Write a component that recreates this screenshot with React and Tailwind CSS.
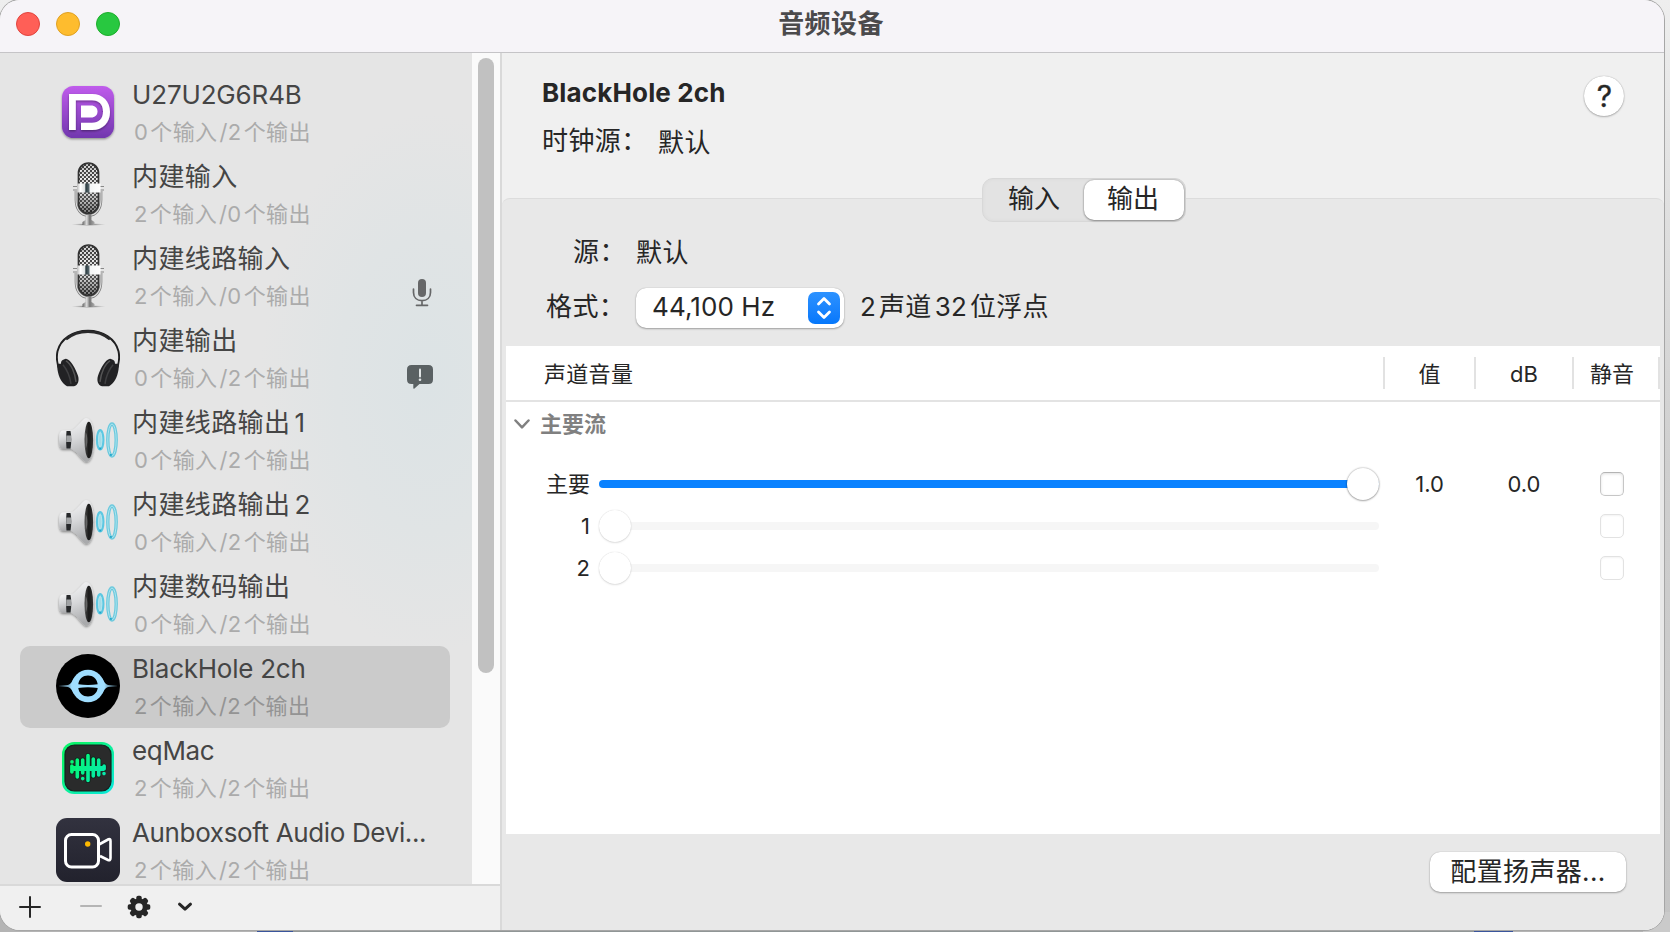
import React from "react";

const Monitor = () => (
  <svg viewBox="0 0 64 64" className="size-16">
    <defs>
      <linearGradient id="pur" x1="0" y1="0" x2="0" y2="1">
        <stop offset="0" stopColor="#c05cec" />
        <stop offset="1" stopColor="#7137ae" />
      </linearGradient>
      <filter id="soft" x="-20%" y="-20%" width="140%" height="150%">
        <feDropShadow dx="0" dy="1.2" stdDeviation="1" floodOpacity=".4" />
      </filter>
    </defs>
    <rect x="6" y="6" width="52" height="52" rx="11.5" fill="url(#pur)" filter="url(#soft)" />
    <path
      d="M13 14H36C47 14 54 21.500 54 32S47 50 36 50H25V42.800H36C43 42.800 47 38.500 47 31.500S43 20.300 36 20.300H19.800V50H13Z"
      fill="#fff"
      filter="url(#soft)"
    />
    <path d="M25 25.500H35C39 25.500 41.500 28 41.500 31.500S39 37.500 35 37.500H25Z" fill="#fff" />
  </svg>
);

const Mic = () => (
  <svg viewBox="0 0 64 64" className="size-16">
    <defs>
      <pattern id="mesh" width="4" height="4" patternUnits="userSpaceOnUse">
        <rect width="4" height="4" fill="#333" />
        <circle cx="1" cy="1" r="1.1" fill="#fff" />
        <circle cx="3" cy="3" r="1.1" fill="#eee" />
      </pattern>
      <linearGradient id="meshShade" x1="0" y1="0" x2="0" y2="1">
        <stop offset="0" stopColor="#444" stopOpacity=".2" />
        <stop offset=".35" stopColor="#fff" stopOpacity=".1" />
        <stop offset="1" stopColor="#111" stopOpacity=".55" />
      </linearGradient>
      <linearGradient id="band" x1="0" y1="0" x2="1" y2="0">
        <stop offset="0" stopColor="#bbb" />
        <stop offset=".15" stopColor="#fff" />
        <stop offset=".32" stopColor="#dfe3e4" />
        <stop offset=".38" stopColor="#2b3b40" />
        <stop offset=".5" stopColor="#56666c" />
        <stop offset=".56" stopColor="#f4f6f6" />
        <stop offset="1" stopColor="#fff" />
      </linearGradient>
      <linearGradient id="stem" x1="0" y1="0" x2="1" y2="0">
        <stop offset="0" stopColor="#666" />
        <stop offset=".35" stopColor="#ddd" />
        <stop offset=".6" stopColor="#777" />
        <stop offset="1" stopColor="#aaa" />
      </linearGradient>
      <radialGradient id="foot">
        <stop offset="0" stopColor="#555" />
        <stop offset="1" stopColor="#999" stopOpacity="0" />
      </radialGradient>
    </defs>
    <ellipse cx="32.500" cy="62.500" rx="17" ry="1.500" fill="url(#foot)" />
    <path d="M20 29V38C20 47 25 53.500 32.500 53.500S45 47 45 38V29" fill="none" stroke="#777" strokeWidth="2.600" />
    <path d="M20 29V38C20 47 25 53.500 32.500 53.500S45 47 45 38V29" fill="none" stroke="#ddd" strokeWidth="1.200" />
    <path d="M29.500 53H35.500V58L38.500 60V63H26.500V60L29.500 58Z" fill="url(#stem)" />
    <rect x="22.500" y="1" width="20" height="50.500" rx="10" fill="url(#mesh)" />
    <rect x="22.500" y="1" width="20" height="50.500" rx="10" fill="url(#meshShade)" stroke="#333" strokeWidth="1.700" />
    <path d="M17 24.500H21M17 28H21M44 24.500H48M44 28H48" stroke="#888" strokeWidth="1.200" />
    <rect x="21" y="21.500" width="23.500" height="9" fill="url(#band)" />
  </svg>
);

const Headphones = () => (
  <svg viewBox="0 -.8 64 64" className="size-16">
    <path d="M4.500 46C1 38 .3 30 1.500 24.500C4.500 12 17 4 32 4S59.500 12 62.500 24.500C63.700 30 63 38 59.500 46" fill="none" stroke="#1f1f20" strokeWidth="1.900" />
    <path d="M10 12.500C17 6.500 25 4.800 32 4.800S47 6.500 54 12.500" fill="none" stroke="#29292a" strokeWidth="2.800" />
    <g id="cup">
      <path d="M5 37C5 33.500 7 32.800 10 32C15 33 19.500 42 22 49C23.500 54 22 58.500 18 59.500H11C6 57 2.500 50 1.500 43L1 37Z" fill="#222224" />
      <path d="M10 34C15 37 19 46 20 55" fill="none" stroke="#555" strokeWidth="1.500" />
      <path d="M7 38C11 43 14 50 15 57" fill="none" stroke="#3f3f41" strokeWidth="1.500" />
    </g>
    <use href="#cup" transform="translate(64 0) scale(-1 1)" />
  </svg>
);

const Speaker = () => (
  <svg viewBox="0 0 64 64" className="size-16">
    <defs>
      <linearGradient id="cone" x1="0" y1="0" x2=".2" y2="1">
        <stop offset="0" stopColor="#f6f6f7" />
        <stop offset=".5" stopColor="#d6d7d9" />
        <stop offset="1" stopColor="#a9aaac" />
      </linearGradient>
      <linearGradient id="dark" x1="0" y1="0" x2="1" y2="0">
        <stop offset="0" stopColor="#4a4a4a" />
        <stop offset=".5" stopColor="#1a1a1a" />
        <stop offset="1" stopColor="#333" />
      </linearGradient>
    </defs>
    <g filter="url(#soft)">
      <path d="M7 22.500H17V41H7C4 41 3 38 3 32S4 22.500 7 22.500Z" fill="url(#cone)" />
      <path d="M30 10C35.500 10 38 20 38 32S35.500 54 30 54C25.500 52.500 21.500 43 14.500 40.500C15.500 35 15.500 28 14.500 23C21.500 20 25.500 11.500 30 10Z" fill="url(#cone)" />
    </g>
    <path d="M10.500 23H14.500C15.500 28 15.500 35 14.500 40.500H10.500C10 35 10 28 10.500 23Z" fill="#26282a" />
    <path d="M10.300 27.500H15V34H10.200Z" fill="#a0a2a4" />
    <ellipse cx="32.800" cy="32" rx="4.300" ry="18.300" fill="url(#dark)" />
    <path d="M29.500 24C32 27 32 37 29.500 41Z" fill="#666" />
    <ellipse cx="44.200" cy="31.800" rx="3.200" ry="9.600" fill="#a5dbe6" stroke="#5cc8e2" strokeWidth="2.200" />
    <ellipse cx="56" cy="32" rx="4.200" ry="16" fill="none" stroke="#6cc9dd" strokeWidth="3.400" />
    <g fill="none" stroke="#b4e6f0" strokeWidth=".9">
      <ellipse cx="44.200" cy="31.800" rx="1.600" ry="7.400" />
      <ellipse cx="56" cy="32" rx="4.200" ry="16" />
    </g>
    <path d="M43.300 40.500H45.200M54 46.500L55.800 47.500" stroke="#1fa5c9" strokeWidth="1.800" />
  </svg>
);

const BlackHole = () => (
  <svg viewBox="0 0 64 64" className="size-16">
    <defs>
      <linearGradient id="ray" x1="0" y1="0" x2="1" y2="0">
        <stop offset="0" stopColor="#a0deff" stopOpacity=".15" />
        <stop offset=".22" stopColor="#a0deff" />
        <stop offset=".78" stopColor="#a0deff" />
        <stop offset="1" stopColor="#a0deff" stopOpacity=".15" />
      </linearGradient>
    </defs>
    <circle cx="32" cy="32" r="32" fill="#000" />
    <path d="M3 31.500L12 31C15 30 16.500 27 17.500 24L20 32L17.500 40C16.500 37 15 34 12 33L3 32.500ZM61 31.500L52 31C49 30 47.500 27 46.500 24L44 32L46.500 40C47.500 37 49 34 52 33L61 32.500Z" fill="url(#ray)" />
    <circle cx="32" cy="32" r="16.200" fill="#a0deff" />
    <path d="M22.300 30.200C23 24.500 27 21.500 32 21.500S41 24.500 41.700 30.200Q32 31.600 22.300 30.200ZM22.300 34C23 39.500 27 42.500 32 42.500S41 39.500 41.700 34Q32 32.600 22.300 34Z" fill="#000" />
    <path d="M16 32H48" stroke="#a0deff" strokeWidth="1.600" />
  </svg>
);

const EqMac = () => (
  <svg viewBox="0 0 64 64" className="size-16">
    <defs>
      <linearGradient id="eq" x1="0" y1="0" x2="1" y2="1">
        <stop offset=".2" stopColor="#0bf56e" />
        <stop offset="1" stopColor="#0ae8e0" />
      </linearGradient>
      <linearGradient id="eqw" gradientUnits="userSpaceOnUse" x1="14" y1="20" x2="50" y2="44">
        <stop offset="0" stopColor="#05fa6c" />
        <stop offset="1" stopColor="#08e8b4" />
      </linearGradient>
    </defs>
    <rect x="6" y="6" width="52" height="52" rx="12" fill="url(#eq)" />
    <rect x="9" y="9" width="46" height="46" rx="9.500" fill="#2a2b2b" stroke="#16211d" strokeWidth="1.200" />
    <g stroke="#0c2419" strokeWidth="5" strokeLinecap="round">
      <path d="M16 30V36M21.300 24V41M26.700 24V37M32 19.500V44.500M37.300 23V40M42.700 24V39M48 30V33" />
    </g>
    <g stroke="url(#eqw)" strokeWidth="3.600" strokeLinecap="round">
      <path d="M15.900 30V36M21.300 24V41M26.700 24V37M32 19.500V44.500M37.300 23V40M42.700 24V39M48.100 30V33" />
      <path d="M16 25.800V25.900M26.700 42.500V42.600M48 37.500V37.600" />
    </g>
    <path d="M16 30H48V35H16Z" fill="url(#eqw)" />
  </svg>
);

const Camera = () => (
  <svg viewBox="0 0 64 64" className="size-16">
    <defs>
      <linearGradient id="cam" x1="0" y1="0" x2="0" y2="1">
        <stop offset="0" stopColor="#32323f" />
        <stop offset="1" stopColor="#22222d" />
      </linearGradient>
    </defs>
    <rect width="64" height="64" rx="11" fill="url(#cam)" />
    <rect x="9.500" y="16.500" width="33" height="32.500" rx="6" fill="none" stroke="#fff" strokeWidth="3" />
    <path d="M43 26.500L52.500 21.300Q54.500 20.500 54.500 23V40Q54.500 43 52 42L44 38" fill="none" stroke="#fff" strokeWidth="2.600" />
    <circle cx="31.700" cy="26" r="2.700" fill="#fdb900" />
  </svg>
);

const MicGlyph = () => (
  <svg viewBox="0 0 20 28" className="ml-[2px] h-7 w-5">
    <rect x="6" y="0" width="8" height="18" rx="4" fill="#666768" />
    <path d="M1.500 10V13.500C1.500 18.500 5 21.700 10 21.700S18.500 18.500 18.500 13.500V10M10 22V26M4.500 26.300H15.500" fill="none" stroke="#666768" strokeWidth="1.700" strokeLinecap="round" />
  </svg>
);

const AlertGlyph = () => (
  <svg viewBox="0 0 26 24" className="mr-[2px] h-6 w-[26px]">
    <path d="M4.500 0H21.500Q26 0 26 4.500V14.500Q26 19 21.500 19H12.500L7.200 23.700Q6.300 24 6.300 23V19H4.500Q0 19 0 14.500V4.500Q0 0 4.500 0Z" fill="#5a6163" />
    <path d="M13 4.500V11.500" stroke="#e1e5e6" strokeWidth="2" strokeLinecap="round" />
    <circle cx="13" cy="14.800" r="1.300" fill="#e1e5e6" />
  </svg>
);

const DEVICES = [
  { icon: Monitor, name: "U27U2G6R4B", ins: 0, outs: 2, latin: "tracking-[-0.15px]" },
  { icon: Mic, name: "内建输入", ins: 2, outs: 0 },
  { icon: Mic, name: "内建线路输入", ins: 2, outs: 0, badge: MicGlyph },
  { icon: Headphones, name: "内建输出", ins: 0, outs: 2, badge: AlertGlyph },
  { icon: Speaker, name: "内建线路输出", num: "1", ins: 0, outs: 2 },
  { icon: Speaker, name: "内建线路输出", num: "2", ins: 0, outs: 2 },
  { icon: Speaker, name: "内建数码输出", ins: 0, outs: 2 },
  { icon: BlackHole, name: "BlackHole 2ch", ins: 2, outs: 2, selected: true, latin: "tracking-[-0.25px]" },
  { icon: EqMac, name: "eqMac", ins: 2, outs: 2, latin: "tracking-[-0.35px]" },
  { icon: Camera, name: "Aunboxsoft Audio Devi...", ins: 2, outs: 2, latin: "tracking-[-0.36px]" },
];

function Device({ d }) {
  const Icon = d.icon;
  const Badge = d.badge;
  return (
    <li className={`flex h-[82px] shrink-0 rounded-[10px] pl-9 pt-2 ${d.selected ? "bg-[#cbcbcb]" : ""}`}>
      <Icon />
      <div className="-mt-px ml-3 w-[236px] whitespace-nowrap">
        <div className={`h-8 text-[26px] leading-[31px] text-[#454545] ${d.latin || "tracking-[0.4px]"}`}>
          {d.name}
          {d.num && <span className="ml-1">{d.num}</span>}
        </div>
        <div className={`mt-[5px] pl-[2px] text-[22px] leading-8 tracking-[0.4px] ${d.selected ? "text-[#949494]" : "text-[#ababab]"}`}>
          <span className="mr-[2px]">{d.ins}</span>个输入<span className="ml-[2px]">/</span>
          <span className="mr-[2px]">{d.outs}</span>个输出
        </div>
      </div>
      {Badge && (
        <div className="ml-[38px] flex h-[74px] w-[30px] items-end justify-center pb-[11px]">
          <Badge />
        </div>
      )}
    </li>
  );
}

function Sidebar() {
  return (
    <aside className="flex w-[502px] shrink-0 flex-col border-r-2 border-[#d9d9d9]">
      <div className="flex h-[831px] overflow-hidden">
        <ul className="flex w-[472px] flex-col bg-[#e5e5e5] bg-[radial-gradient(ellipse_170px_270px_at_430px_330px,#dce3e5_0%,#e0e4e5_55%,#e5e5e500_100%)] pl-5 pr-[22px] pt-[19px]">
          {DEVICES.map((d, i) => (
            <Device key={i} d={d} />
          ))}
        </ul>
        <div className="w-7 bg-[#fafafa] pl-[6px] pt-[5px]">
          <div className="h-[615px] w-4 rounded-full bg-[#c1c1c1]" />
        </div>
      </div>
      <div className="flex flex-1 items-center border-t-2 border-[#d9d9d9] bg-[#f0f0f0] pb-[2px] pl-[19px]">
        <svg viewBox="0 0 22 22" className="size-[22px]">
          <path d="M11 1V21M1 11H21" stroke="#262626" strokeWidth="2" strokeLinecap="round" />
        </svg>
        <svg viewBox="0 0 22 22" className="ml-[39px] size-[22px]">
          <path d="M1 10H21" stroke="#b5b5b5" strokeWidth="2" strokeLinecap="round" />
        </svg>
        <svg viewBox="-12 -12 24 24" className="ml-[25px] size-6">
          <g fill="#262626">
            {[0, 45, 90, 135].map((a) => (
              <rect key={a} x="-2.700" y="-11.300" width="5.400" height="22.600" rx="1.800" transform={`rotate(${a})`} />
            ))}
            <circle r="8.700" />
          </g>
          <circle r="3.700" fill="#f0f0f0" />
        </svg>
        <svg viewBox="0 0 16 10" className="ml-[26px] h-[10px] w-4">
          <path d="M2.500 2.200L8 7.200L13.500 2.200" fill="none" stroke="#262626" strokeWidth="3" strokeLinecap="round" strokeLinejoin="round" />
        </svg>
      </div>
    </aside>
  );
}

function Slider({ value, disabled }) {
  return (
    <div className="relative flex h-8 w-[780px] items-center">
      <div className={`h-2 w-full rounded-full ${disabled ? "bg-[#f6f6f6]" : "bg-[#0a82ff]"}`} />
      <div
        className={`absolute top-0 size-8 rounded-full bg-white ${
          disabled
            ? "shadow-[0_0_1px_rgba(0,0,0,0.2),0_1px_2px_rgba(0,0,0,0.12)]"
            : "shadow-[0_0_2px_rgba(0,0,0,0.4),0_1px_2px_rgba(0,0,0,0.25)]"
        }`}
        style={{ left: value * 748 }}
      />
    </div>
  );
}

function Channel({ label, value, amount, db, disabled }) {
  return (
    <div className="flex h-[42px] items-center text-[22px] leading-8">
      <div className="w-[84px] text-right">{label}</div>
      <div className="ml-[9px]">
        <Slider value={value} disabled={disabled} />
      </div>
      <div className="ml-[6px] w-[89px] text-center">{amount}</div>
      <div className="ml-[2px] w-[96px] text-center">{db}</div>
      <div
        className={`ml-7 size-6 rounded-[5px] border bg-white ${
          disabled
            ? "border-[#e2e2e2] shadow-[inset_0_1px_2px_rgba(0,0,0,0.05)]"
            : "border-[#c6c6c6] border-t-[#b4b4b4] shadow-[inset_0_1px_3px_rgba(0,0,0,0.12)]"
        }`}
      />
    </div>
  );
}

function ChannelTable() {
  const rule = "h-8 w-[2px] bg-[#e2e2e2]";
  return (
    <div className="ml-1 mt-4 h-[488px] w-[1154px] bg-white">
      <div className="flex h-14 items-center border-b-2 border-[#e3e3e3] text-[22px] leading-8">
        <div className="w-[877px] pl-[38px] pt-[2px] tracking-[0.3px]">声道音量</div>
        <div className={rule} />
        <div className="w-[89px] pt-[2px] text-center">值</div>
        <div className={rule} />
        <div className="w-[96px] pt-[2px] text-center">dB</div>
        <div className={rule} />
        <div className="w-[84px] pl-4 pt-[2px]">静音</div>
        <div className={rule} />
      </div>
      <div className="flex h-11 items-center pl-2 text-[22px] font-bold leading-8 text-[#808080]">
        <svg viewBox="0 0 16 10" className="mr-[10px] h-[10px] w-4">
          <path d="M1.500 1.500L8 8.300L14.500 1.500" fill="none" stroke="#808080" strokeWidth="2.500" strokeLinecap="round" strokeLinejoin="round" />
        </svg>
        主要流
      </div>
      <div className="pt-[17px]">
        <Channel label="主要" value={1} amount="1.0" db="0.0" />
        <Channel label="1" value={0} disabled />
        <Channel label="2" value={0} disabled />
      </div>
    </div>
  );
}

function Detail() {
  return (
    <main className="flex w-[1162px] flex-col bg-[#f0f0f0] text-[26px] leading-8 text-[#262626]">
      <div className="flex h-[125px] justify-between pl-10 pr-10 pt-[23px]">
        <div>
          <h1 className="mt-[1px] font-bold tracking-[0.15px]">BlackHole 2ch</h1>
          <div className="mt-4 flex tracking-[0.4px]">
            <div className="w-[116px]">时钟源：</div>
            <div className="mt-[2px]">默认</div>
          </div>
        </div>
        <button className="flex size-10 items-center justify-center rounded-full bg-white pl-[1px] text-[30px] shadow-[0_0_1px_rgba(0,0,0,0.35),0_1px_2px_rgba(0,0,0,0.25)] [-webkit-text-stroke:0.3px_#262626]">
          ?
        </button>
      </div>
      <div className="flex flex-col">
        <div className="z-10 ml-[480px] flex h-11 w-[204px] rounded-[11px] border border-[#d8d8d8] bg-[#e3e3e3] p-[1px] shadow-[inset_0_0_4px_rgba(0,0,0,0.04)]">
          <div className="w-[100px] text-center leading-[38px]">输入</div>
          <div className="h-10 w-[100px] rounded-[10px] bg-white pr-[2px] text-center leading-[38px] shadow-[0_0_2px_rgba(0,0,0,0.35),0_1px_2px_rgba(0,0,0,0.3)]">输出</div>
        </div>
      </div>
      <section className="-mt-6 flex flex-1 flex-col rounded-t-lg border-t border-[#dcdcdc] bg-[#e8e8e8]">
        <div className="mt-[35px] flex h-9 items-center tracking-[0.4px]">
          <div className="w-[134px] pl-[71px]">源：</div>
          <div className="mt-[2px]">默认</div>
        </div>
        <div className="mt-[18px] flex h-10 items-center">
          <div className="w-[134px] pb-[2px] pl-[44px] tracking-[0.4px]">格式：</div>
          <div className="flex h-10 w-[208px] items-center justify-between rounded-[10px] bg-white pl-4 pr-1 shadow-[0_0_1px_rgba(0,0,0,0.3),0_1px_2px_rgba(0,0,0,0.3)]">
            <span className="whitespace-nowrap pb-[2px] tracking-[0.1px]">44,100 Hz</span>
            <span className="flex size-8 items-center justify-center rounded-[7px] bg-gradient-to-b from-[#2c92ff] to-[#0477fb]">
              <svg viewBox="0 0 16 24" className="h-6 w-4">
                <path d="M2.500 8L8 2.500L13.500 8M2.500 16L8 21.500L13.500 16" fill="none" stroke="#fff" strokeWidth="2.800" strokeLinecap="round" strokeLinejoin="round" />
              </svg>
            </span>
          </div>
          <div className="ml-[16px] whitespace-nowrap pb-[2px] tracking-[0.25px]">
            <span className="mr-[3px]">2</span>声道<span className="mx-[3px]">32</span>位浮点
          </div>
        </div>
        <div className="mt-[2px]">
          <ChannelTable />
        </div>
        <div className="flex justify-end pr-[38px] pt-[18px]">
          <button className="h-10 w-[196px] rounded-[10px] bg-white text-[26px] leading-[38px] tracking-[0.35px] shadow-[0_0_1px_rgba(0,0,0,0.3),0_1px_2px_rgba(0,0,0,0.3)]">
            配置扬声器...
          </button>
        </div>
      </section>
    </main>
  );
}

export default function App() {
  return (
    <div className="relative h-[932px] w-[1670px] overflow-hidden bg-gradient-to-b from-[#eeeeee] via-[#cfcfcf] to-[#c4c4c4] font-[Inter,'Noto_Sans_CJK_SC',sans-serif]">
      <div className="absolute inset-x-0 bottom-0 flex h-5">
        <div className="w-[257px] bg-[#b4b4b4]" />
        <div className="w-9 bg-[#3a559c]" />
        <div className="w-[1181px] bg-[#909696]" />
        <div className="w-[39px] bg-[#3a559c]" />
        <div className="w-[130px] bg-[#b4b4b4]" />
        <div className="flex-1 bg-[#cacaca]" />
      </div>
      <div className="relative flex h-[930px] w-[1664px] flex-col overflow-hidden rounded-[20px] bg-[#f0f0f0] shadow-[0_0_0_1px_#a6a6a6]">
        <header className="grid h-[53px] shrink-0 grid-cols-3 border-b border-[#c5c4c7] bg-[#f6f4f8]">
          <div className="flex h-12 items-center gap-4 pl-4">
            <span className="size-6 rounded-full border border-[#e0443e] bg-[#ff5f57]" />
            <span className="size-6 rounded-full border border-[#dfa023] bg-[#febc2e]" />
            <span className="size-6 rounded-full border border-[#1dad2b] bg-[#28c840]" />
          </div>
          <div className="pr-[2px] text-center text-[26px] font-bold leading-[47px] tracking-[0.4px] text-[#4b4a4c]">音频设备</div>
        </header>
        <div className="flex flex-1">
          <Sidebar />
          <Detail />
        </div>
      </div>
    </div>
  );
}
